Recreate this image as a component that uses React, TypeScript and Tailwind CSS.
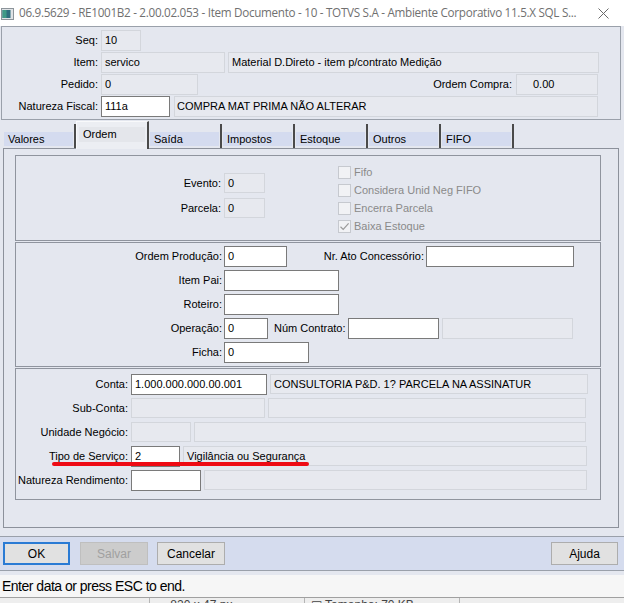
import clsx from "clsx";

type BoxProps = {
  className?: string;
  value?: string;
  white?: boolean;
};

// Single-line text field; grey when read-only, white when editable
function Box({ className, value, white }: BoxProps) {
  return (
    <div
      className={clsx(
        "shrink-0 border px-[3px] flex items-center whitespace-nowrap overflow-hidden",
        white ? "bg-white border-[#7a7a7a]" : "bg-[#e7e9ef] border-[#d3d6dc]",
        className
      )}
    >
      {value}
    </div>
  );
}

function Label({ className, children }: { className?: string; children: React.ReactNode }) {
  return <span className={clsx("shrink-0 text-right whitespace-nowrap", className)}>{children}</span>;
}

function Check({ label, checked }: { label: string; checked?: boolean }) {
  return (
    <div className="flex items-center h-[13px] gap-[3px] text-[#8a8a8a]">
      <div className="w-[13px] h-[13px] border border-[#c6c9cf] bg-[#f1f2f5] flex items-center justify-center">
        {checked && (
          <svg width="11" height="11" viewBox="0 0 11 11">
            <path d="M1.5 5.8 L4.2 8.4 L9.6 2.4" fill="none" stroke="#9a9a9a" strokeWidth="1.2" />
          </svg>
        )}
      </div>
      <span>{label}</span>
    </div>
  );
}

const tabs = ["Valores", "Ordem", "Saída", "Impostos", "Estoque", "Outros", "FIFO"];

export default function App() {
  return (
    <div className="w-[624px] h-[603px] overflow-hidden bg-[#e4e7ef] text-black text-[11px] font-['Liberation_Sans',Arial,sans-serif] flex flex-col">
      {/* Title bar */}
      <div className="h-[26px] shrink-0 bg-white flex items-center">
        <svg className="ml-[1px] mt-[1px]" width="13" height="12" viewBox="0 0 13 12">
          <rect x="0.5" y="0.5" width="12" height="11" fill="#dfe3e6" stroke="#8c949a" />
          <rect x="1.5" y="2" width="8" height="8" fill="#2f6f7e" />
          <rect x="1.5" y="2" width="4" height="8" fill="#3f9a86" />
        </svg>
        <span className="ml-[5px] text-[11.7px] text-[#707070] whitespace-nowrap tracking-[-0.3px] font-['Open_Sans',sans-serif]">
          06.9.5629 - RE1001B2 - 2.00.02.053 - Item Documento - 10 - TOTVS S.A - Ambiente Corporativo 11.5.X SQL S...
        </span>
        <svg className="ml-auto mr-[15px]" width="11" height="11" viewBox="0 0 11 11">
          <path d="M0.5 0.5 L10.5 10.5 M10.5 0.5 L0.5 10.5" stroke="#6a6a6a" strokeWidth="1" />
        </svg>
      </div>

      {/* Header fields */}
      <div className="ml-[1px] w-[620px] h-[94px] shrink-0 border border-[#9aa0aa] flex flex-col gap-[1px] pt-[3px]">
        <div className="flex items-center gap-[3px] h-[21px]">
          <Label className="w-[96px]">Seq:</Label>
          <Box className="w-[40px] h-[21px]" value="10" />
        </div>
        <div className="flex items-center gap-[3px] h-[21px]">
          <Label className="w-[96px]">Item:</Label>
          <Box className="w-[124px] h-[21px]" value="servico" />
          <Box className="w-[371px] h-[21px]" value="Material D.Direto - item p/contrato Medição" />
        </div>
        <div className="flex items-center gap-[3px] h-[21px] w-[596px]">
          <Label className="w-[96px]">Pedido:</Label>
          <Box className="w-[97px] h-[21px]" value="0" />
          <Label className="ml-auto mr-[1px]">Ordem Compra:</Label>
          <Box className="w-[82px] h-[21px] pl-[16px]" value="0.00" />
        </div>
        <div className="flex items-center gap-[3px] h-[21px]">
          <Label className="w-[96px]">Natureza Fiscal:</Label>
          <Box white className="w-[69px] h-[21px]" value="111a" />
          <Box className="w-[424px] h-[21px] ml-[1px] uppercase pl-[2px]" value="COMPRA MAT PRIMA NÃO ALTERAR" />
        </div>
      </div>

      {/* Tabs */}
      <div className="flex items-end h-[28px] shrink-0 pl-[3px] relative z-10">
        {tabs.map((t) =>
          t === "Ordem" ? (
            <div
              key={t}
              className="w-[73px] h-[28px] -mb-px bg-[#eceef3] border-t border-l border-[#f8f9fb] border-r-[2px] border-r-[#4a4a4a] flex items-start pt-[5px] px-[2px]"
            >
              <div className="flex-1 h-[15px] bg-[#e4e6eb] pl-[4px] leading-[15px]">{t}</div>
            </div>
          ) : (
            <div key={t} className="w-[73px] h-[24px] flex items-end pb-[2px] pl-[1px] border-r-[2px] border-r-[#4a4a4a]">
              <div className="flex-1 mr-[1px] h-[14px] bg-[#d4dbef] pl-[4px] leading-[14px]">{t}</div>
            </div>
          )
        )}
      </div>

      {/* Tab page: Ordem */}
      <div className="ml-[3px] w-[616px] h-[380px] shrink-0 border border-[#8c919b] pt-[6px] pl-[11px] flex flex-col gap-[1px]">
        {/* Evento / flags */}
        <div className="w-[586px] h-[86px] shrink-0 border border-[#8f949e] flex">
          <div className="flex flex-col gap-[5px] pt-[17px]">
            <div className="flex items-center gap-[3px]">
              <Label className="w-[205px]">Evento:</Label>
              <Box className="w-[41px] h-[20px]" value="0" />
            </div>
            <div className="flex items-center gap-[3px]">
              <Label className="w-[205px]">Parcela:</Label>
              <Box className="w-[41px] h-[20px]" value="0" />
            </div>
          </div>
          <div className="ml-[73px] pt-[10px] flex flex-col gap-[5px]">
            <Check label="Fifo" />
            <Check label="Considera Unid Neg FIFO" />
            <Check label="Encerra Parcela" />
            <Check label="Baixa Estoque" checked />
          </div>
        </div>

        {/* Produção */}
        <div className="w-[586px] h-[125px] shrink-0 border border-[#8f949e] flex flex-col gap-[3px] pt-[3px]">
          <div className="flex items-center gap-[2px] h-[21px]">
            <Label className="w-[206px]">Ordem Produção:</Label>
            <Box white className="w-[63px] h-[21px]" value="0" />
            <Label className="w-[135px]">Nr. Ato Concessório:</Label>
            <Box white className="w-[148px] h-[21px]" />
          </div>
          <div className="flex items-center gap-[2px] h-[21px]">
            <Label className="w-[206px]">Item Pai:</Label>
            <Box white className="w-[115px] h-[21px]" />
          </div>
          <div className="flex items-center gap-[2px] h-[21px]">
            <Label className="w-[206px]">Roteiro:</Label>
            <Box white className="w-[115px] h-[21px]" />
          </div>
          <div className="flex items-center gap-[2px] h-[21px]">
            <Label className="w-[206px]">Operação:</Label>
            <Box white className="w-[44px] h-[21px]" value="0" />
            <Label className="ml-[4px]">Núm Contrato:</Label>
            <Box white className="w-[91px] h-[21px]" />
            <Box className="w-[131px] h-[21px] ml-[1px]" />
          </div>
          <div className="flex items-center gap-[2px] h-[21px]">
            <Label className="w-[206px]">Ficha:</Label>
            <Box white className="w-[85px] h-[21px]" value="0" />
          </div>
        </div>

        {/* Contabilização */}
        <div className="relative w-[586px] h-[132px] shrink-0 border border-[#8f949e] flex flex-col gap-[4px] pt-[5px]">
          <div className="flex items-center gap-[3px] h-[20px]">
            <Label className="w-[112px]">Conta:</Label>
            <Box white className="w-[136px] h-[21px]" value="1.000.000.000.00.001" />
            <Box className="w-[318px] h-[20px]" value="CONSULTORIA P&D. 1? PARCELA NA ASSINATUR" />
          </div>
          <div className="flex items-center gap-[3px] h-[20px]">
            <Label className="w-[112px]">Sub-Conta:</Label>
            <Box className="w-[134px] h-[20px]" />
            <Box className="w-[318px] h-[20px]" />
          </div>
          <div className="flex items-center gap-[3px] h-[20px]">
            <Label className="w-[112px]">Unidade Negócio:</Label>
            <Box className="w-[60px] h-[20px]" />
            <Box className="w-[392px] h-[20px]" />
          </div>
          <div className="flex items-center gap-[3px] h-[20px]">
            <Label className="w-[112px]">Tipo de Serviço:</Label>
            <Box white className="w-[49px] h-[21px]" value="2" />
            <Box className="w-[404px] h-[20px]" value="Vigilância ou Segurança" />
          </div>
          <div className="flex items-center gap-[3px] h-[20px]">
            <Label className="w-[112px]">Natureza Rendimento:</Label>
            <Box white className="w-[70px] h-[21px]" />
            <Box className="w-[383px] h-[20px]" />
          </div>
          {/* red marker under Tipo de Serviço */}
          <div className="absolute left-[36px] top-[93px] w-[257px] h-[4px] rounded-full bg-[#ee0a14]" />
        </div>
      </div>

      {/* Buttons */}
      <div className="mt-[8px] h-[35px] shrink-0 border-t border-b border-[#9aa0aa] bg-[#d5dcee] flex items-start pt-[5px] pl-[3px] pr-[6px] gap-[10px] text-[12px]">
        <button className="w-[67px] h-[23px] bg-[#e1e1e1] border-[2px] border-[#2a7bd4]">OK</button>
        <button className="w-[68px] h-[23px] bg-[#cccccc] border border-[#bfbfbf] text-[#a0a0a0]">Salvar</button>
        <button className="w-[68px] h-[23px] bg-[#e1e1e1] border border-[#adadad] -ml-[1px]">Cancelar</button>
        <button className="ml-auto w-[67px] h-[23px] bg-[#e1e1e1] border border-[#adadad]">Ajuda</button>
      </div>

      {/* Status line */}
      <div className="mt-[4px] h-[22px] shrink-0 bg-[#f6f6f6] flex items-center pl-[2px] text-[14px] tracking-[-0.5px] text-black">
        Enter data or press ESC to end.
      </div>

      {/* Taskbar strip below the window */}
      <div className="flex-1 bg-[#eeeeee] border-t border-[#a0a0a0] overflow-hidden flex text-[12px] leading-[14px] text-[#444]">
        <div className="w-[150px] border-r border-[#b5b5b5]" />
        <div className="w-[155px] pl-[6px] border-r border-[#b5b5b5]">▭ 820 x 47 px</div>
        <div className="w-[155px] pl-[6px] border-r border-[#b5b5b5]">▤ Tamanho: 70 KB</div>
      </div>
    </div>
  );
}
